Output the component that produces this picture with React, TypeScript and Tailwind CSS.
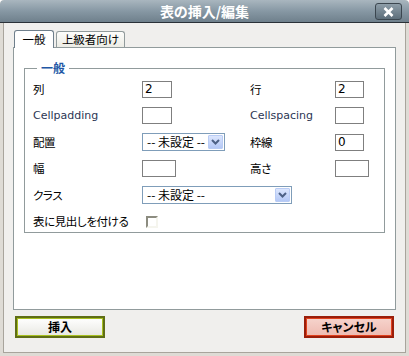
import React, { useState } from "react";

const jp = "font-['Noto_Sans_CJK_JP','Noto_Sans',sans-serif] [font-feature-settings:'palt']";

const Field = ({ value = "", w = "w-[30px]" }: { value?: string; w?: string }) => (
  <div
    className={`flex h-[17px] ${w} items-center border border-[#7f7f7f] bg-white px-[2px] text-[12px] leading-none text-black font-['DejaVu_Sans',sans-serif]`}
  >
    {value}
  </div>
);

const Select = ({ w }: { w: string }) => (
  <div
    className={`flex h-[18px] ${w} items-center justify-between border border-[#7f9db9] bg-white pl-[4px] pr-[1px]`}
  >
    <span className={`whitespace-nowrap text-[12px] leading-none text-black ${jp}`}>-- 未設定 --</span>
    <div className="flex h-[14px] w-[15px] shrink-0 items-center justify-center rounded-[1px] border border-[#b9ccf5] bg-gradient-to-b from-[#dce6fd] to-[#b4c8f6]">
      <svg width="9" height="6" viewBox="0 0 9 6">
        <path d="M1 1 L4.5 4.5 L8 1" stroke="#4d6185" strokeWidth="2" fill="none" />
      </svg>
    </div>
  </div>
);

const Label = ({ children, latin }: { children: React.ReactNode; latin?: boolean }) => (
  <div
    className={
      latin
        ? "text-[11px] leading-none text-[#2c3654] font-['DejaVu_Sans',sans-serif]"
        : `whitespace-nowrap text-[11.5px] leading-none tracking-[-0.4px] text-black ${jp}`
    }
  >
    {children}
  </div>
);

const App = () => {
  const [tab, setTab] = useState<0 | 1>(0);
  const [header, setHeader] = useState(false);

  return (
    <div className="flex h-[356px] w-[409px] flex-col overflow-hidden rounded-t-[4px] bg-[#dedbd5]">
      {/* title bar */}
      <div className="relative flex h-[23px] shrink-0 items-center justify-center rounded-t-[4px] border-b border-[#2a3138] bg-gradient-to-b from-[#a9b6bf] via-[#8798a4] to-[#6f808c]">
        <span className={`text-[14px] font-bold leading-none text-white ${jp}`}>表の挿入/編集</span>
        <div className="absolute right-[7px] top-[3px] flex h-[17px] w-[27px] items-center justify-center rounded-[3px] border border-[#3b464f] bg-gradient-to-b from-[#8e9ea9] to-[#5d6e7a]">
          <svg width="11" height="10" viewBox="0 0 11 10">
            <path d="M1.5 1 L9.5 9 M9.5 1 L1.5 9" stroke="#fff" strokeWidth="2.6" />
          </svg>
        </div>
      </div>

      {/* body */}
      <div className="mx-[3px] mb-[3px] flex flex-1 flex-col border-x border-b border-[#a8a49c] bg-[#f0efed] px-[9px] pt-[8px]">
        {/* tabs */}
        <div className="flex h-[17px] items-end gap-[2px] pl-[1px]">
          <div
            onClick={() => setTab(0)}
            className={`z-10 flex h-[18px] w-[40px] cursor-pointer items-center justify-center rounded-t-[3px] border border-b-0 border-[#6f7f8c] ${
              tab === 0 ? "bg-white" : "bg-[#f2f2ee]"
            } text-[11.5px] leading-none text-black ${jp}`}
          >
            一般
          </div>
          <div
            onClick={() => setTab(1)}
            className={`flex h-[17px] w-[69px] cursor-pointer items-center justify-center rounded-t-[3px] border border-b-0 border-[#919b9c] ${
              tab === 1 ? "bg-white" : "bg-gradient-to-b from-[#fdfdfb] to-[#ebebe4]"
            } text-[11.5px] leading-none text-black ${jp}`}
          >
            上級者向け
          </div>
        </div>

        {/* panel */}
        <div className="-mt-px h-[263px] border border-[#919b9c] bg-white px-[10px] pt-[14px]">
          <fieldset className="h-[171px] border border-[#919b9c] px-[8px] pb-0 pt-[2px]">
            <legend className={`ml-[4px] px-[4px] text-[12px] font-bold leading-none text-[#2156a5] ${jp}`}>
              一般
            </legend>
            <div className="grid grid-cols-[109px_108px_85px_1fr] auto-rows-[26.5px] items-center">
              <Label>列</Label>
              <Field value="2" />
              <Label>行</Label>
              <Field value="2" w="w-[29px]" />

              <Label latin>Cellpadding</Label>
              <Field />
              <Label latin>Cellspacing</Label>
              <Field w="w-[29px]" />

              <Label>配置</Label>
              <Select w="w-[83px]" />
              <Label>枠線</Label>
              <Field value="0" w="w-[29px]" />

              <Label>幅</Label>
              <Field w="w-[34px]" />
              <Label>高さ</Label>
              <Field w="w-[34px]" />

              <Label>クラス</Label>
              <div className="col-span-3">
                <Select w="w-[150px]" />
              </div>

              <Label>表に見出しを付ける</Label>
              <div className="col-span-3 pl-[4px]">
                <div
                  onClick={() => setHeader((v) => !v)}
                  className="flex h-[12px] w-[12px] cursor-pointer items-center justify-center border-2 border-b-[#f5f5ee] border-l-[#8c8c80] border-r-[#f5f5ee] border-t-[#8c8c80] bg-white"
                >
                  {header && <span className="text-[9px] leading-none">✓</span>}
                </div>
              </div>
            </div>
          </fieldset>
        </div>

        {/* buttons */}
        <div className="mt-[6px] flex justify-between px-[2px]">
          <button className="flex h-[22px] w-[90px] items-center justify-center border-2 border-[#5f6e16] bg-gradient-to-b from-white to-[#e8e8e2] shadow-[inset_0_0_0_1px_#a8c020]">
            <span className={`text-[12px] font-bold leading-none text-black ${jp}`}>挿入</span>
          </button>
          <button className="flex h-[22px] w-[90px] items-center justify-center border-2 border-[#9a1e0a] bg-gradient-to-b from-[#f6d4cd] to-[#eebab0] shadow-[inset_0_0_0_1px_#e0401c]">
            <span className={`text-[12px] font-bold leading-none text-black ${jp}`}>キャンセル</span>
          </button>
        </div>
      </div>
    </div>
  );
};

export default App;
